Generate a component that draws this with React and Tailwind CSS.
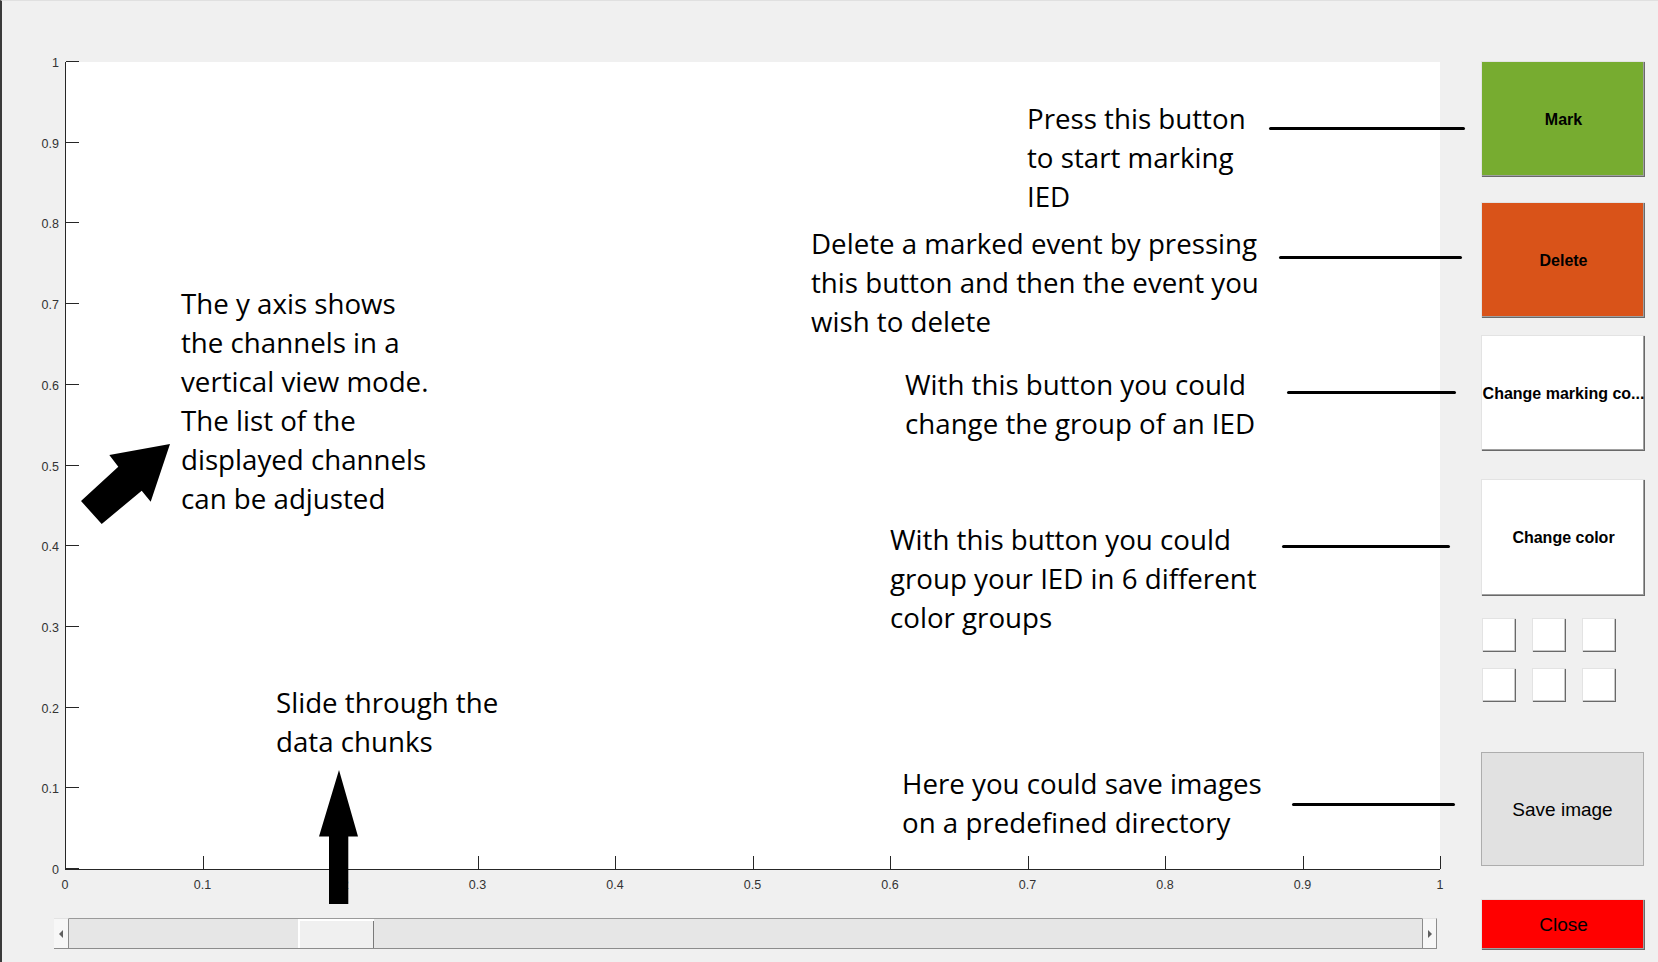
import React from "react";

const yTicks = [1, 0.9, 0.8, 0.7, 0.6, 0.5, 0.4, 0.3, 0.2, 0.1, 0];
const xTicks = [0, 0.1, 0.2, 0.3, 0.4, 0.5, 0.6, 0.7, 0.8, 0.9, 1];

const AXW = 1375;
const AXH = 807;

function Axes() {
  return (
    <div className="relative ml-[11px] h-[808px] w-[1375px] border-b border-l border-[#262626] bg-white">
      {yTicks.map((v, i) => {
        const top = (i * AXH) / 10;
        return (
          <React.Fragment key={"y" + i}>
            <div className="absolute left-0 h-px w-[13px] bg-[#262626]" style={{ top: top - 1 }} />
            <div
              className="absolute right-[calc(100%+7px)] text-[12.5px] leading-none text-[#333]"
              style={{ top: top - 5 }}
            >
              {String(v)}
            </div>
          </React.Fragment>
        );
      })}
      {xTicks.map((v, i) => {
        const left = (i * AXW) / 10;
        return (
          <React.Fragment key={"x" + i}>
            <div className="absolute bottom-0 h-[13px] w-px bg-[#262626]" style={{ left: left - 1 }} />
            <div
              className="absolute top-[calc(100%+10px)] -translate-x-1/2 text-[12.5px] leading-none text-[#333]"
              style={{ left: left - 1 }}
            >
              {String(v)}
            </div>
          </React.Fragment>
        );
      })}
    </div>
  );
}

function ClassicButton({ className, children }) {
  return (
    <div
      className={
        "flex items-center justify-center border-l border-t border-[#e3e3e3] shadow-[inset_-1px_-1px_#696969,inset_-2px_-2px_#a0a0a0] " +
        className
      }
    >
      {children}
    </div>
  );
}

function Square() {
  return (
    <div className="h-[34px] w-[34px] border-l border-t border-[#e3e3e3] bg-white shadow-[inset_-1px_-1px_#696969,inset_-2px_-2px_#c8c8c8]" />
  );
}

function Slider() {
  return (
    <div className="mt-[48px] flex h-[31px] w-[1383px] border-b border-[#8c8c8c]">
      <div className="flex w-[15px] items-center justify-center border-r border-t border-[#8c8c8c] border-t-[#e3e3e3] bg-[#f7f7f7]">
        <div className="h-0 w-0 border-y-[4px] border-r-[4px] border-y-transparent border-r-[#606060]" />
      </div>
      <div className="flex flex-1 border-t border-[#9a9a9a] bg-[#e6e6e6]">
        <div className="ml-[229px] w-[76px] border-l-2 border-t-2 border-white border-r-[#7a7a7a] bg-[#f0f0f0] shadow-[inset_-1px_0_#7a7a7a]" />
      </div>
      <div className="flex w-[15px] items-center justify-center border-l border-r border-t border-[#8c8c8c] border-t-[#e3e3e3] bg-[#f7f7f7]">
        <div className="h-0 w-0 border-y-[4px] border-l-[4px] border-y-transparent border-l-[#606060]" />
      </div>
    </div>
  );
}

const noteFont = { fontFamily: '"Open Sans", "Noto Sans", sans-serif' };

function Note({ x, y, lines }) {
  return (
    <div
      className="absolute whitespace-nowrap text-[27.7px] leading-[39px] text-black"
      style={{ left: x - 2, top: y - 1, ...noteFont }}
    >
      {lines.map((l, i) => (
        <div key={i}>{l}</div>
      ))}
    </div>
  );
}

function Line({ x1, x2, y }) {
  return (
    <div
      className="absolute h-[3px] rounded-full bg-black"
      style={{ left: x1 - 2, width: x2 - x1, top: y - 1.5 }}
    />
  );
}

export default function App() {
  return (
    <div
      className="relative flex h-[962px] w-[1658px] overflow-hidden border-l-2 border-t border-l-[#3a3a3a] border-t-[#e0e0e0] bg-[#f0f0f0]"
      style={{ fontFamily: '"Liberation Sans", Arial, sans-serif' }}
    >
      <div className="flex flex-col pl-[52px] pt-[61px]">
        <Axes />
        <Slider />
      </div>

      <div className="ml-[41px] flex w-[164px] flex-col pt-[60px]">
        <ClassicButton className="h-[116px] bg-[#77ac30] text-[16px] font-bold text-black">Mark</ClassicButton>
        <ClassicButton className="mt-[25px] h-[116px] bg-[#d95319] text-[16px] font-bold text-black">
          Delete
        </ClassicButton>
        <ClassicButton className="mt-[17px] h-[116px] bg-white text-[16px] font-bold text-black">
          <span className="whitespace-nowrap">Change marking co...</span>
        </ClassicButton>
        <ClassicButton className="mt-[28px] h-[117px] bg-white text-[16px] font-bold text-black">
          Change color
        </ClassicButton>
        <div className="ml-px mt-[22px] flex gap-[16px]">
          <Square />
          <Square />
          <Square />
        </div>
        <div className="ml-px mt-[16px] flex gap-[16px]">
          <Square />
          <Square />
          <Square />
        </div>
        <div className="mt-[50px] flex h-[114px] w-[163px] items-center justify-center border border-[#adadad] bg-[#e1e1e1] pt-[3px] text-[19px] text-black">
          Save image
        </div>
        <ClassicButton className="mt-[33px] h-[51px] bg-[#ff0000] text-[19px] text-black">Close</ClassicButton>
      </div>

      {/* annotations */}
      <Note x={1027} y={99} lines={["Press this button", "to start marking", "IED"]} />
      <Note
        x={811}
        y={223.5}
        lines={["Delete a marked event by pressing", "this button and then the event you", "wish to delete"]}
      />
      <Note
        x={181}
        y={284}
        lines={[
          "The y axis shows",
          "the channels in a",
          "vertical view mode.",
          "The list of the",
          "displayed channels",
          "can be adjusted",
        ]}
      />
      <Note x={905} y={364.5} lines={["With this button you could", "change the group of an IED"]} />
      <Note
        x={890}
        y={519.5}
        lines={["With this button you could", "group your IED in 6 different", "color groups"]}
      />
      <Note x={276} y={682.5} lines={["Slide through the", "data chunks"]} />
      <Note x={902} y={764} lines={["Here you could save images", "on a predefined directory"]} />

      <Line x1={1269} x2={1465} y={127} />
      <Line x1={1279} x2={1462} y={256} />
      <Line x1={1287} x2={1456} y={391} />
      <Line x1={1282} x2={1450} y={545} />
      <Line x1={1292} x2={1455} y={803} />

      <svg
        className="pointer-events-none absolute left-[-2px] top-[-1px]"
        width="1658"
        height="962"
        viewBox="0 0 1658 962"
      >
        <polygon
          points="170,444 150.7,501.7 141.7,490.7 101.7,524 81,501 118.3,466.7 109.3,455"
          fill="#000"
        />
        <polygon points="339,770 358,836.5 348.3,836.5 348.3,904 329,904 329,836.5 319,836.5" fill="#000" />
      </svg>
    </div>
  );
}
